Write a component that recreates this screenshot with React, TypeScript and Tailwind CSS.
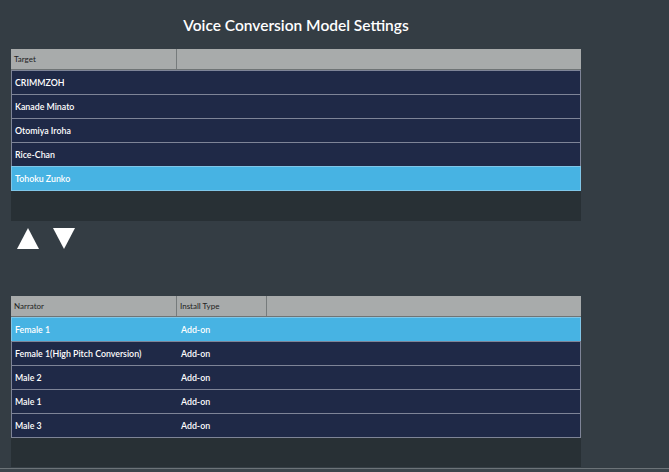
import React from 'react'

const targets = ['CRIMMZOH', 'Kanade Minato', 'Otomiya Iroha', 'Rice-Chan', 'Tohoku Zunko']
const narrators = [
  { name: 'Female 1', type: 'Add-on' },
  { name: 'Female 1(High Pitch Conversion)', type: 'Add-on' },
  { name: 'Male 2', type: 'Add-on' },
  { name: 'Male 1', type: 'Add-on' },
  { name: 'Male 3', type: 'Add-on' },
]

const Row = ({ selected, children }: { selected?: boolean; children: React.ReactNode }) => (
  <div
    className={`flex h-[24px] items-center border-t border-x ${
      selected ? 'bg-[#47b3e3] border-[#7fc6e8]' : 'bg-[#1f2947] border-[#7e8497]'
    }`}
  >
    {children}
  </div>
)

export default function App() {
  return (
    <div
      className="w-[669px] h-[472px] bg-[#343d44] flex flex-col text-white overflow-hidden"
      style={{ fontFamily: 'Lato, "Open Sans", sans-serif' }}
    >
      <div className="pl-[11px] w-[581px] flex flex-col flex-1">
        <h1 className="h-[49px] flex items-center justify-center text-[15.5px] font-semibold pt-[3px]">
          Voice Conversion Model Settings
        </h1>

        <div className="flex flex-col">
          <div className="flex h-[21px] bg-[#a8abab] text-[#222] text-[8px] border-b border-[#6f7475]">
            <div className="w-[166px] border-r border-[#767b7c] flex items-center pl-[3px]">Target</div>
            <div className="flex-1" />
          </div>
          {targets.map((t, i) => (
            <Row key={t} selected={i === 4}>
              <span className="pl-[3px] text-[8.8px] font-semibold">{t}</span>
            </Row>
          ))}
          <div className="h-[31px] bg-[#283035] border-t border-[#7fc6e8]" />
        </div>

        <div className="flex gap-[14px] pl-[6px] pt-[7px] h-[75px]">
          <svg width="22" height="21" viewBox="0 0 22 21">
            <polygon points="11,0 22,21 0,21" fill="#fff" />
          </svg>
          <svg width="22" height="21" viewBox="0 0 22 21">
            <polygon points="0,0 22,0 11,21" fill="#fff" />
          </svg>
        </div>

        <div className="flex flex-col">
          <div className="flex h-[21px] bg-[#a8abab] text-[#222] text-[8px] border-b border-[#6f7475]">
            <div className="w-[166px] border-r border-[#767b7c] flex items-center pl-[3px]">Narrator</div>
            <div className="w-[90px] border-r border-[#767b7c] flex items-center pl-[3px]">Install Type</div>
            <div className="flex-1" />
          </div>
          {narrators.map((n, i) => (
            <Row key={n.name} selected={i === 0}>
              <span className="w-[166px] pl-[3px] text-[8.8px] font-semibold">{n.name}</span>
              <span className="pl-[3px] text-[8.8px] font-semibold">{n.type}</span>
            </Row>
          ))}
          <div className="h-[30px] bg-[#283035] border-t border-[#7e8497]" />
        </div>
      </div>
      <div className="h-[4px] border-t border-[#6c7378] bg-[#3c454c]" />
    </div>
  )
}
